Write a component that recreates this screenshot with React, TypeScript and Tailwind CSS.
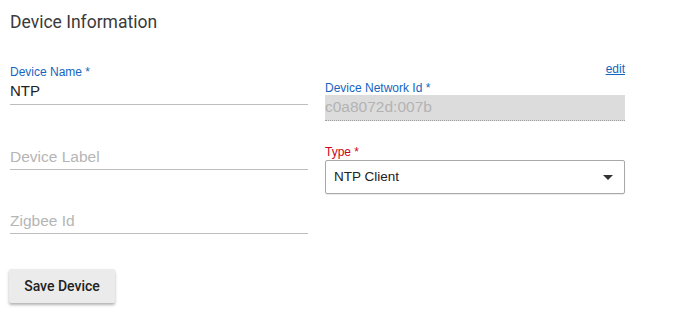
import React from "react";

const sans = "font-['Liberation_Sans',Arial,sans-serif]";

function Underlined({ text, placeholder, pt }: { text: string; placeholder?: boolean; pt: string }) {
  return (
    <div
      className={`h-[26px] border-b border-[#bdbdbd] leading-[20px] ${pt} ${
        placeholder ? "text-[15.5px] text-[#b5b5b5]" : "text-[15px] text-[#222]"
      }`}
    >
      {text}
    </div>
  );
}

export default function App() {
  return (
    <div className={`w-[690px] h-[327px] bg-white pl-[10px] pt-[10px] ${sans}`}>
      <h1 className="h-[24px] text-[17.5px] leading-[24px] text-[#3a3a3a] font-['Roboto',sans-serif]">
        Device Information
      </h1>
      <div className="flex gap-[17px]">
        <div className="w-[298px] flex flex-col">
          <div className="mt-[31px] h-[14px] text-[12px] leading-[14px] text-[#1565c0]">Device Name *</div>
          <Underlined text="NTP" pt="pt-[2px]" />
          <div className="mt-[39px]">
            <Underlined text="Device Label" placeholder pt="pt-[3px]" />
          </div>
          <div className="mt-[38px]">
            <Underlined text="Zigbee Id" placeholder pt="pt-[3px]" />
          </div>
        </div>
        <div className="w-[300px] flex flex-col">
          <div className="mt-[28px] h-[14px] text-[12px] leading-[14px] text-right">
            <a href="#" className="text-[#1565c0] underline">
              edit
            </a>
          </div>
          <div className="mt-[5px] h-[14px] text-[12px] leading-[14px] text-[#1565c0]">Device Network Id *</div>
          <div className="h-[26px] bg-[#dcdcdc] border-b border-dotted border-[#9e9e9e] pt-[2px] text-[15.5px] leading-[20px] text-[#b3b3b3]">
            c0a8072d:007b
          </div>
          <div className="mt-[24px] h-[14px] text-[12px] leading-[14px] text-[#d0021b]">Type *</div>
          <div className="mt-[1px] h-[34px] border border-[#a8a8a8] rounded-[2px] flex items-center justify-between pl-[8px] pr-[11px] pb-[1px] shadow-[0_1px_1px_rgba(0,0,0,0.08)]">
            <span className="text-[13.5px] leading-[20px] text-[#222]">NTP Client</span>
            <svg width="10" height="5" viewBox="0 0 10 5" className="mt-[2px]">
              <path d="M0 0h10L5 5z" fill="#333" />
            </svg>
          </div>
        </div>
      </div>
      <button className="mt-[35px] -ml-px w-[106px] h-[34px] bg-[#ebebeb] rounded-[2px] shadow-[0_2px_3px_rgba(0,0,0,0.3)] flex items-center justify-center pb-[1px] text-[14px] leading-[20px] font-medium text-[#222] font-['Roboto',sans-serif]">
        Save Device
      </button>
    </div>
  );
}
